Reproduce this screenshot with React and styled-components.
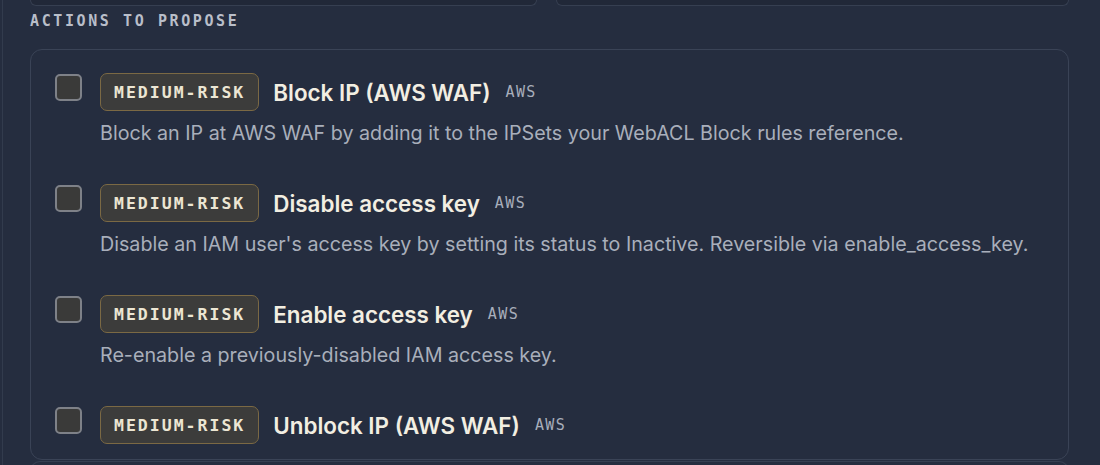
import React from "react";
import styled, { createGlobalStyle } from "styled-components";

const GlobalStyle = createGlobalStyle`
  html, body {
    margin: 0;
    padding: 0;
    background: #252d3f;
    overflow: hidden;
  }
`;

const Page = styled.div`
  margin-left: 2px;
  border-left: 1px solid #323b4d;
  padding-left: 27px;
  width: 1039px;
  height: 465px;
  display: flex;
  flex-direction: column;
`;

const TopRow = styled.div`
  display: grid;
  grid-template-columns: 507px 513px;
  gap: 19px;
`;

const TopBox = styled.div`
  height: 5px;
  background: #212838;
  border: 1px solid #363f51;
  border-top: none;
  border-radius: 0 0 10px 10px;
`;

const SectionLabel = styled.div`
  margin-top: 5px;
  font-family: "DejaVu Sans Mono", "Liberation Mono", monospace;
  font-size: 15px;
  line-height: 20px;
  font-weight: 600;
  letter-spacing: 2.6px;
  color: #b9bec9;
`;

const Card = styled.div`
  flex: none;
  margin-top: 18px;
  height: 411px;
  border: 1px solid #3a4356;
  border-radius: 12px;
  overflow: hidden;
  padding: 23px 24px 0 24px;
  box-sizing: border-box;
  display: flex;
  flex-direction: column;
  gap: 38px;
`;

const Row = styled.div`
  display: flex;
  align-items: flex-start;
  gap: 18px;
`;

const Check = styled.div`
  flex: none;
  width: 27px;
  height: 27px;
  margin-top: 1px;
  box-sizing: border-box;
  background: #3a3a39;
  border: 2px solid #7e8188;
  border-radius: 5px;
`;

const Body = styled.div`
  display: flex;
  flex-direction: column;
`;

const Head = styled.div`
  display: flex;
  align-items: center;
  gap: 14px;
`;

const Badge = styled.span`
  height: 38px;
  box-sizing: border-box;
  padding: 0 13px 0 13px;
  display: inline-flex;
  align-items: center;
  background: #3c3c3b;
  border: 1.5px solid #7b6944;
  border-radius: 7px;
  font-family: "DejaVu Sans Mono", "Liberation Mono", monospace;
  font-size: 16.5px;
  font-weight: 700;
  letter-spacing: 2px;
  color: #ece6d3;
`;

const Title = styled.span`
  font-family: Inter, "Noto Sans", sans-serif;
  font-size: 22.4px;
  font-weight: 600;
  color: #f2eee2;
`;

const Provider = styled.span`
  margin-left: 1px;
  font-family: "DejaVu Sans Mono", "Liberation Mono", monospace;
  font-size: 15px;
  letter-spacing: 1.4px;
  color: #a8aebb;
`;

const Desc = styled.div`
  margin-top: 9px;
  font-family: Inter, "Noto Sans", sans-serif;
  font-size: 19.7px;
  line-height: 26px;
  color: #a9afbb;
`;

const NextBox = styled.div`
  flex: none;
  margin-top: 1px;
  height: 20px;
  border: 1px solid #363f51;
  border-bottom: none;
  border-radius: 10px 10px 0 0;
`;

const actions = [
  {
    title: "Block IP (AWS WAF)",
    desc: "Block an IP at AWS WAF by adding it to the IPSets your WebACL Block rules reference.",
  },
  {
    title: "Disable access key",
    desc: "Disable an IAM user's access key by setting its status to Inactive. Reversible via enable_access_key.",
  },
  {
    title: "Enable access key",
    desc: "Re-enable a previously-disabled IAM access key.",
  },
  {
    title: "Unblock IP (AWS WAF)",
  },
];

export default function App() {
  return (
    <>
      <GlobalStyle />
      <Page>
        <TopRow>
          <TopBox />
          <TopBox />
        </TopRow>
        <SectionLabel>ACTIONS TO PROPOSE</SectionLabel>
        <Card>
          {actions.map((a) => (
            <Row key={a.title}>
              <Check />
              <Body>
                <Head>
                  <Badge>MEDIUM-RISK</Badge>
                  <Title>{a.title}</Title>
                  <Provider>AWS</Provider>
                </Head>
                {a.desc && <Desc>{a.desc}</Desc>}
              </Body>
            </Row>
          ))}
        </Card>
        <NextBox />
      </Page>
    </>
  );
}
